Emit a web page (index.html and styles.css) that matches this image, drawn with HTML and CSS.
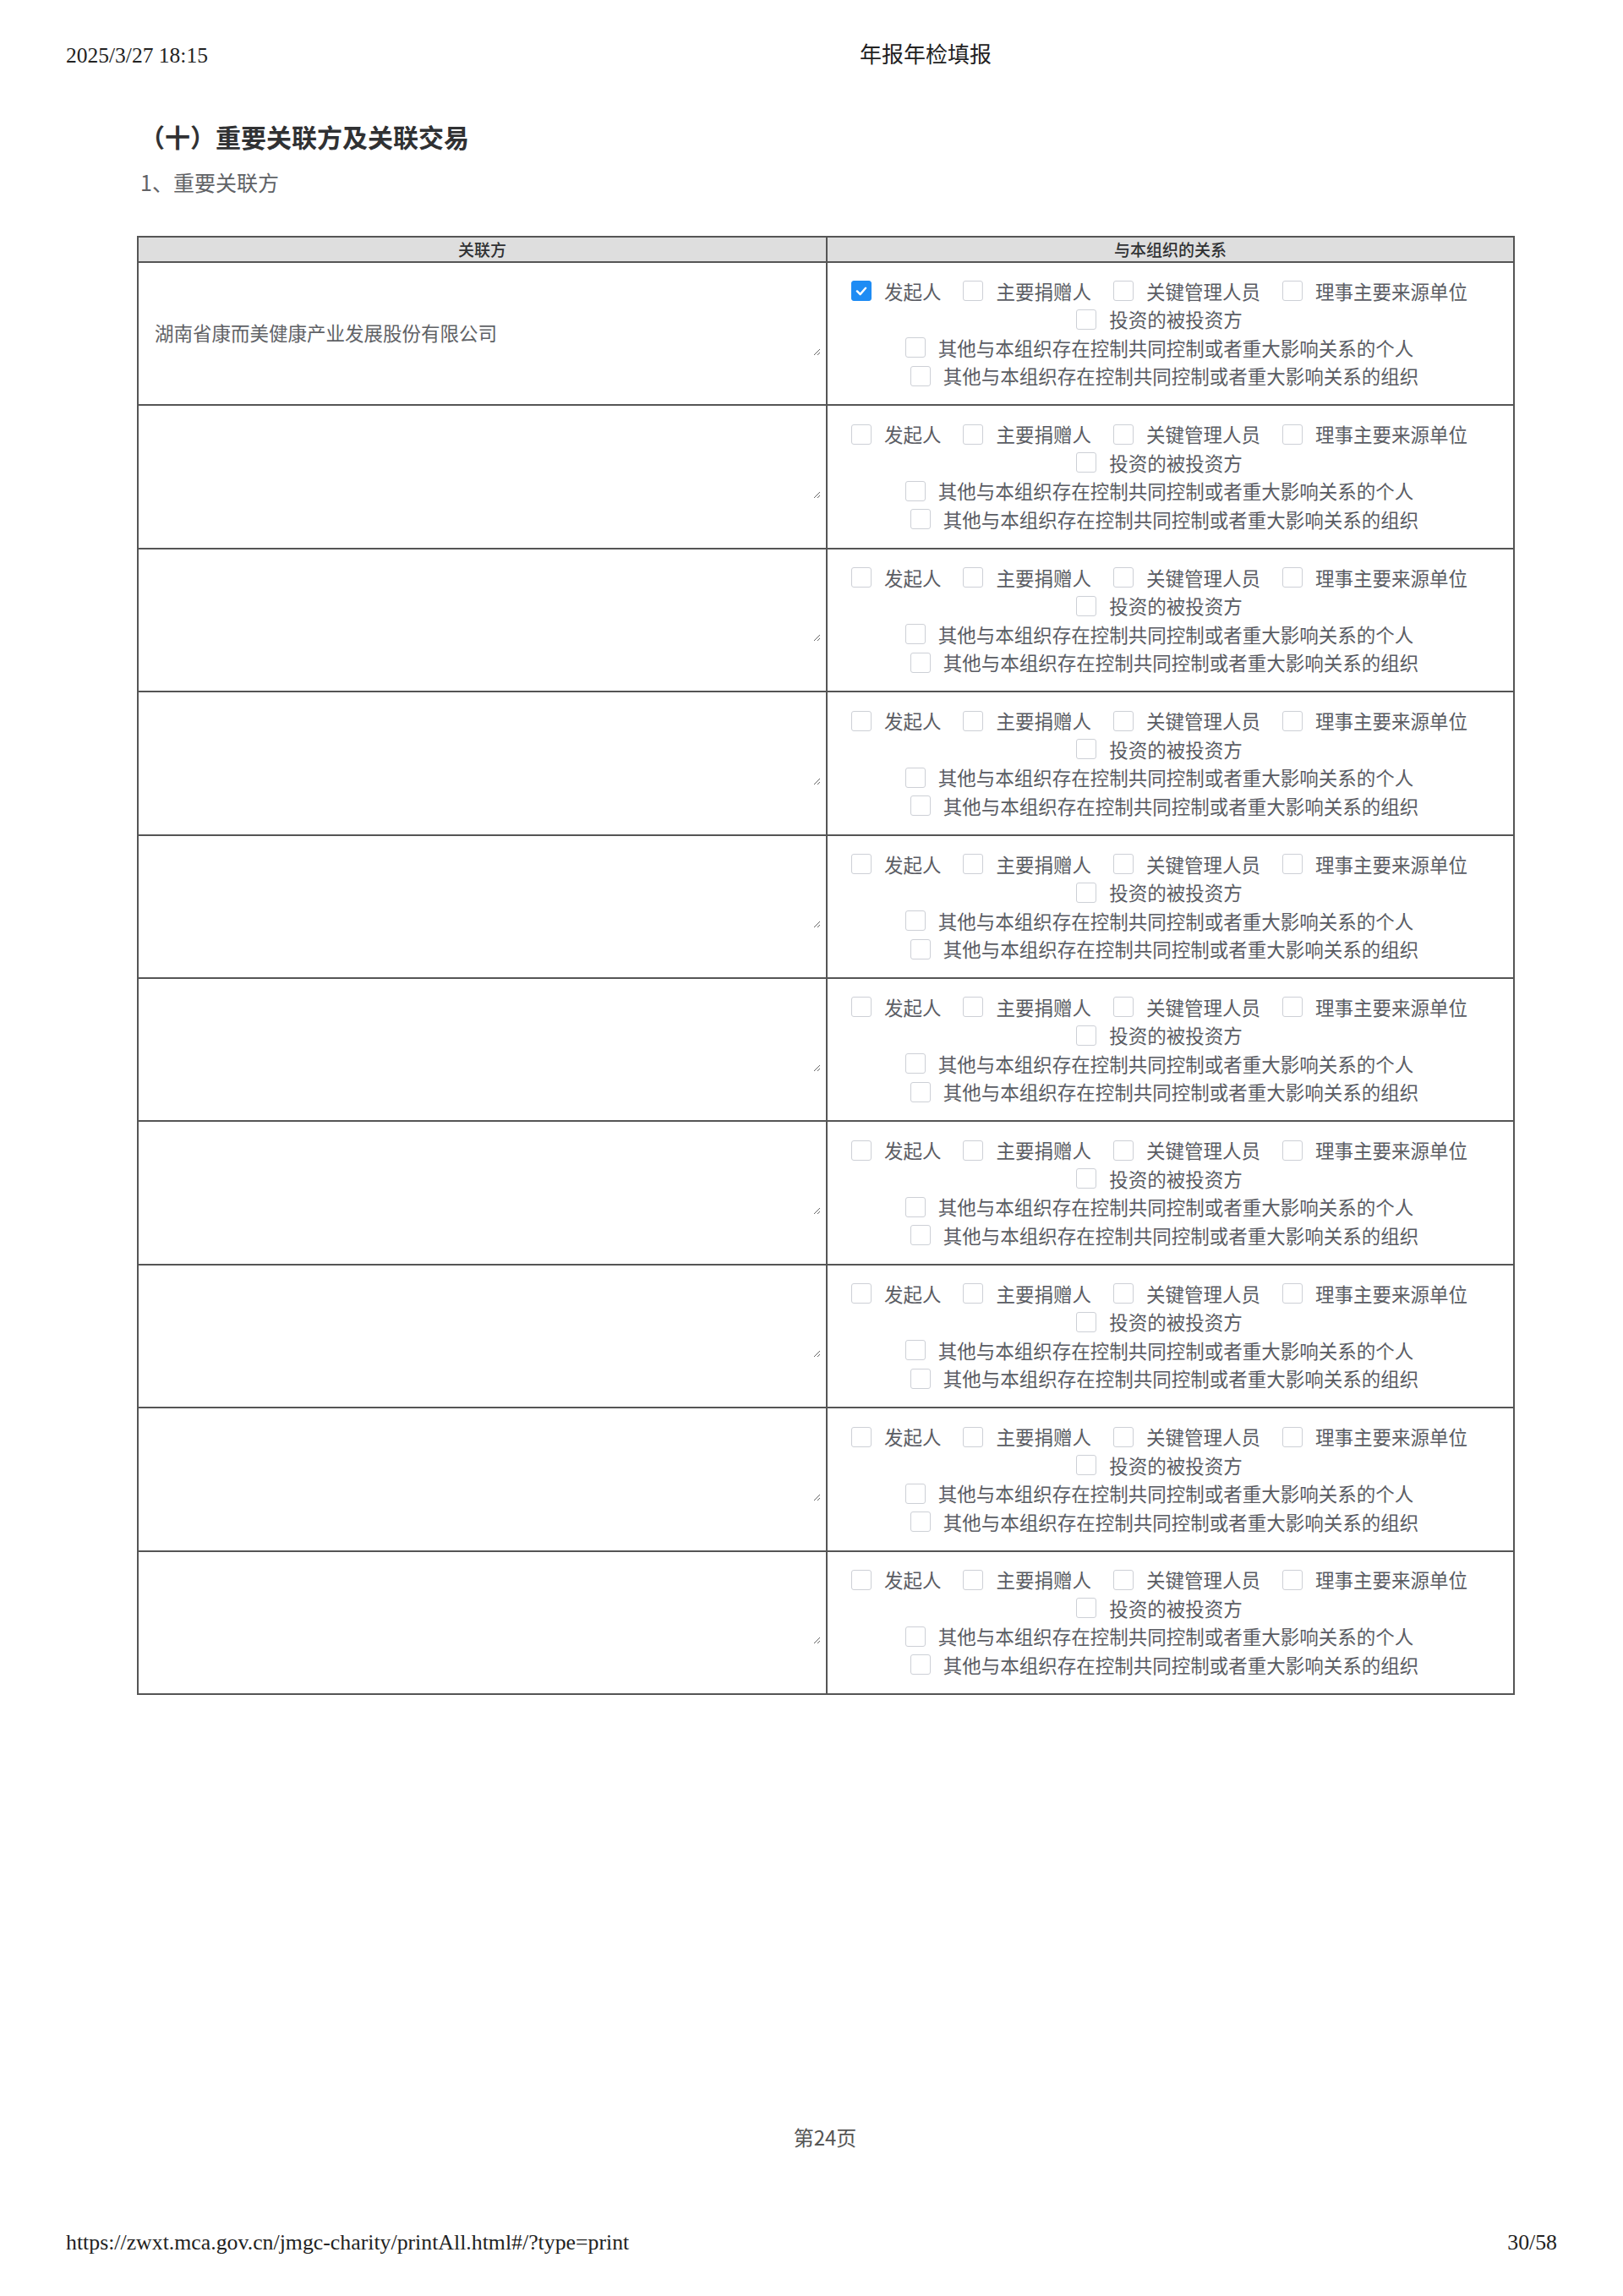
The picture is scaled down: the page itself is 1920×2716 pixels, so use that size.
FILE: index.html
```html
<!DOCTYPE html>
<html lang="zh-CN">
<head>
<meta charset="utf-8">
<title>年报年检填报</title>
<link rel="stylesheet" href="styles.css">
</head>
<body>
<div class="sheet">
  <header class="print-head">
    <span class="print-date">2025/3/27 18:15</span>
    <span class="print-title">年报年检填报</span>
  </header>

  <main class="content">
    <h2 class="sec-title">（十）重要关联方及关联交易</h2>
    <p class="sub-title">1、重要关联方</p>

    <table class="rel-table">
      <colgroup><col class="c-left"><col class="c-right"></colgroup>
      <thead>
        <tr><th>关联方</th><th>与本组织的关系</th></tr>
      </thead>
      <tbody id="rows">
        <tr>
          <td class="cell-name"><textarea class="name-input" readonly>湖南省康而美健康产业发展股份有限公司</textarea></td>
          <td class="cell-rel">
            <div class="cb-group">
              <label class="cb"><span class="box checked"><svg viewBox="0 0 24 24" width="24" height="24"><polyline points="6.5,12.5 10.5,16.5 17.5,8.5" fill="none" stroke="#fff" stroke-width="2.6" stroke-linecap="round" stroke-linejoin="round"/></svg></span><span class="txt">发起人</span></label>
              <label class="cb"><span class="box"></span><span class="txt">主要捐赠人</span></label>
              <label class="cb"><span class="box"></span><span class="txt">关键管理人员</span></label>
              <label class="cb"><span class="box"></span><span class="txt">理事主要来源单位</span></label>
              <label class="cb"><span class="box"></span><span class="txt">投资的被投资方</span></label>
              <label class="cb"><span class="box"></span><span class="txt">其他与本组织存在控制共同控制或者重大影响关系的个人</span></label>
              <label class="cb"><span class="box"></span><span class="txt">其他与本组织存在控制共同控制或者重大影响关系的组织</span></label>
            </div>
          </td>
        </tr>
        <tr>
          <td class="cell-name"><textarea class="name-input" readonly></textarea></td>
          <td class="cell-rel"><div class="cb-group">
            <label class="cb"><span class="box"></span><span class="txt">发起人</span></label>
            <label class="cb"><span class="box"></span><span class="txt">主要捐赠人</span></label>
            <label class="cb"><span class="box"></span><span class="txt">关键管理人员</span></label>
            <label class="cb"><span class="box"></span><span class="txt">理事主要来源单位</span></label>
            <label class="cb"><span class="box"></span><span class="txt">投资的被投资方</span></label>
            <label class="cb"><span class="box"></span><span class="txt">其他与本组织存在控制共同控制或者重大影响关系的个人</span></label>
            <label class="cb"><span class="box"></span><span class="txt">其他与本组织存在控制共同控制或者重大影响关系的组织</span></label>
          </div></td>
        </tr>
        <tr>
          <td class="cell-name"><textarea class="name-input" readonly></textarea></td>
          <td class="cell-rel"><div class="cb-group">
            <label class="cb"><span class="box"></span><span class="txt">发起人</span></label>
            <label class="cb"><span class="box"></span><span class="txt">主要捐赠人</span></label>
            <label class="cb"><span class="box"></span><span class="txt">关键管理人员</span></label>
            <label class="cb"><span class="box"></span><span class="txt">理事主要来源单位</span></label>
            <label class="cb"><span class="box"></span><span class="txt">投资的被投资方</span></label>
            <label class="cb"><span class="box"></span><span class="txt">其他与本组织存在控制共同控制或者重大影响关系的个人</span></label>
            <label class="cb"><span class="box"></span><span class="txt">其他与本组织存在控制共同控制或者重大影响关系的组织</span></label>
          </div></td>
        </tr>
        <tr>
          <td class="cell-name"><textarea class="name-input" readonly></textarea></td>
          <td class="cell-rel"><div class="cb-group">
            <label class="cb"><span class="box"></span><span class="txt">发起人</span></label>
            <label class="cb"><span class="box"></span><span class="txt">主要捐赠人</span></label>
            <label class="cb"><span class="box"></span><span class="txt">关键管理人员</span></label>
            <label class="cb"><span class="box"></span><span class="txt">理事主要来源单位</span></label>
            <label class="cb"><span class="box"></span><span class="txt">投资的被投资方</span></label>
            <label class="cb"><span class="box"></span><span class="txt">其他与本组织存在控制共同控制或者重大影响关系的个人</span></label>
            <label class="cb"><span class="box"></span><span class="txt">其他与本组织存在控制共同控制或者重大影响关系的组织</span></label>
          </div></td>
        </tr>
        <tr>
          <td class="cell-name"><textarea class="name-input" readonly></textarea></td>
          <td class="cell-rel"><div class="cb-group">
            <label class="cb"><span class="box"></span><span class="txt">发起人</span></label>
            <label class="cb"><span class="box"></span><span class="txt">主要捐赠人</span></label>
            <label class="cb"><span class="box"></span><span class="txt">关键管理人员</span></label>
            <label class="cb"><span class="box"></span><span class="txt">理事主要来源单位</span></label>
            <label class="cb"><span class="box"></span><span class="txt">投资的被投资方</span></label>
            <label class="cb"><span class="box"></span><span class="txt">其他与本组织存在控制共同控制或者重大影响关系的个人</span></label>
            <label class="cb"><span class="box"></span><span class="txt">其他与本组织存在控制共同控制或者重大影响关系的组织</span></label>
          </div></td>
        </tr>
        <tr>
          <td class="cell-name"><textarea class="name-input" readonly></textarea></td>
          <td class="cell-rel"><div class="cb-group">
            <label class="cb"><span class="box"></span><span class="txt">发起人</span></label>
            <label class="cb"><span class="box"></span><span class="txt">主要捐赠人</span></label>
            <label class="cb"><span class="box"></span><span class="txt">关键管理人员</span></label>
            <label class="cb"><span class="box"></span><span class="txt">理事主要来源单位</span></label>
            <label class="cb"><span class="box"></span><span class="txt">投资的被投资方</span></label>
            <label class="cb"><span class="box"></span><span class="txt">其他与本组织存在控制共同控制或者重大影响关系的个人</span></label>
            <label class="cb"><span class="box"></span><span class="txt">其他与本组织存在控制共同控制或者重大影响关系的组织</span></label>
          </div></td>
        </tr>
        <tr>
          <td class="cell-name"><textarea class="name-input" readonly></textarea></td>
          <td class="cell-rel"><div class="cb-group">
            <label class="cb"><span class="box"></span><span class="txt">发起人</span></label>
            <label class="cb"><span class="box"></span><span class="txt">主要捐赠人</span></label>
            <label class="cb"><span class="box"></span><span class="txt">关键管理人员</span></label>
            <label class="cb"><span class="box"></span><span class="txt">理事主要来源单位</span></label>
            <label class="cb"><span class="box"></span><span class="txt">投资的被投资方</span></label>
            <label class="cb"><span class="box"></span><span class="txt">其他与本组织存在控制共同控制或者重大影响关系的个人</span></label>
            <label class="cb"><span class="box"></span><span class="txt">其他与本组织存在控制共同控制或者重大影响关系的组织</span></label>
          </div></td>
        </tr>
        <tr>
          <td class="cell-name"><textarea class="name-input" readonly></textarea></td>
          <td class="cell-rel"><div class="cb-group">
            <label class="cb"><span class="box"></span><span class="txt">发起人</span></label>
            <label class="cb"><span class="box"></span><span class="txt">主要捐赠人</span></label>
            <label class="cb"><span class="box"></span><span class="txt">关键管理人员</span></label>
            <label class="cb"><span class="box"></span><span class="txt">理事主要来源单位</span></label>
            <label class="cb"><span class="box"></span><span class="txt">投资的被投资方</span></label>
            <label class="cb"><span class="box"></span><span class="txt">其他与本组织存在控制共同控制或者重大影响关系的个人</span></label>
            <label class="cb"><span class="box"></span><span class="txt">其他与本组织存在控制共同控制或者重大影响关系的组织</span></label>
          </div></td>
        </tr>
        <tr>
          <td class="cell-name"><textarea class="name-input" readonly></textarea></td>
          <td class="cell-rel"><div class="cb-group">
            <label class="cb"><span class="box"></span><span class="txt">发起人</span></label>
            <label class="cb"><span class="box"></span><span class="txt">主要捐赠人</span></label>
            <label class="cb"><span class="box"></span><span class="txt">关键管理人员</span></label>
            <label class="cb"><span class="box"></span><span class="txt">理事主要来源单位</span></label>
            <label class="cb"><span class="box"></span><span class="txt">投资的被投资方</span></label>
            <label class="cb"><span class="box"></span><span class="txt">其他与本组织存在控制共同控制或者重大影响关系的个人</span></label>
            <label class="cb"><span class="box"></span><span class="txt">其他与本组织存在控制共同控制或者重大影响关系的组织</span></label>
          </div></td>
        </tr>
        <tr>
          <td class="cell-name"><textarea class="name-input" readonly></textarea></td>
          <td class="cell-rel"><div class="cb-group">
            <label class="cb"><span class="box"></span><span class="txt">发起人</span></label>
            <label class="cb"><span class="box"></span><span class="txt">主要捐赠人</span></label>
            <label class="cb"><span class="box"></span><span class="txt">关键管理人员</span></label>
            <label class="cb"><span class="box"></span><span class="txt">理事主要来源单位</span></label>
            <label class="cb"><span class="box"></span><span class="txt">投资的被投资方</span></label>
            <label class="cb"><span class="box"></span><span class="txt">其他与本组织存在控制共同控制或者重大影响关系的个人</span></label>
            <label class="cb"><span class="box"></span><span class="txt">其他与本组织存在控制共同控制或者重大影响关系的组织</span></label>
          </div></td>
        </tr>
      </tbody>
    </table>
  </main>

  <div class="page-no">第24页</div>

  <footer class="print-foot">
    <span class="print-url">https://zwxt.mca.gov.cn/jmgc-charity/printAll.html#/?type=print</span>
    <span class="print-count">30/58</span>
  </footer>
</div>
</body>
</html>
```

FILE: styles.css
```css
* { box-sizing: border-box; }

html, body {
  margin: 0;
  padding: 0;
  background: #fff;
}

body {
  font-family: "Noto Sans CJK SC", "Noto Sans", sans-serif;
  color: #333;
}

.sheet {
  width: 1920px;
  height: 2716px;
  display: flex;
  flex-direction: column;
}

.print-head {
  display: flex;
  align-items: center;
  padding: 51px 0 0 78px;
  height: 81px;
  font-family: "Liberation Serif", "Noto Sans CJK SC", serif;
  font-size: 25.5px;
  line-height: 30px;
  color: #222;
}

.print-title {
  margin-left: 771px;
  font-size: 26px;
}

.content {
  padding-left: 162px;
}

.sec-title {
  margin: 59px 0 0 3px;
  font-size: 30px;
  line-height: 42px;
  font-weight: 700;
  color: #303133;
}

.sub-title {
  margin: 15px 0 0 4px;
  font-size: 25px;
  line-height: 36px;
  color: #606266;
}

.rel-table {
  margin-top: 46px;
  width: 1628px;
  border-collapse: collapse;
  border: 2px solid #555;
  table-layout: fixed;
}

.c-left { width: 815px; }
.c-right { width: 813px; }

.rel-table th {
  height: 28px;
  padding: 0;
  background: #dedede;
  border: 2px solid #555;
  font-size: 19px;
  line-height: 28px;
  font-weight: 500;
  color: #303133;
  text-align: center;
}

.rel-table td {
  height: 169.4px;
  padding: 0;
  border: 2px solid #555;
  vertical-align: middle;
}

.rel-table td.cell-name {
  padding: 0 6px 0 0;
}

.name-input {
  display: block;
  width: 100%;
  height: 52px;
  padding: 8px 19px;
  margin: 0;
  border: 0;
  outline: none;
  background: transparent;
  font-family: "Noto Sans CJK SC", "Noto Sans", sans-serif;
  font-size: 22.5px;
  line-height: 33px;
  color: #606266;
  overflow: hidden;
  resize: both;
}

.cb-group {
  display: flex;
  flex-wrap: wrap;
  justify-content: center;
}

.cb {
  display: flex;
  align-items: center;
  height: 33.5px;
  margin-right: 26px;
  font-size: 22.5px;
  color: #5a5c63;
  white-space: nowrap;
}

.cb:last-child {
  margin-right: 14px;
}

.box {
  display: inline-flex;
  width: 24px;
  height: 24px;
  margin-right: 15px;
  border: 1px solid #cdd0d6;
  border-radius: 3px;
  background: #fff;
  align-items: center;
  justify-content: center;
}

.box.checked {
  background: #1e8cf4;
  border-color: #1e8cf4;
}

.box svg { display: block; }

.txt { line-height: 33px; }

.page-no {
  margin-top: auto;
  text-align: center;
  padding-left: 32px;
  font-size: 24px;
  line-height: 34px;
  color: #555;
}

.print-foot {
  display: flex;
  justify-content: space-between;
  padding: 93px 78px 48px 78px;
  font-family: "Liberation Serif", "Noto Sans CJK SC", serif;
  font-size: 25.8px;
  line-height: 30px;
  color: #222;
}
```
